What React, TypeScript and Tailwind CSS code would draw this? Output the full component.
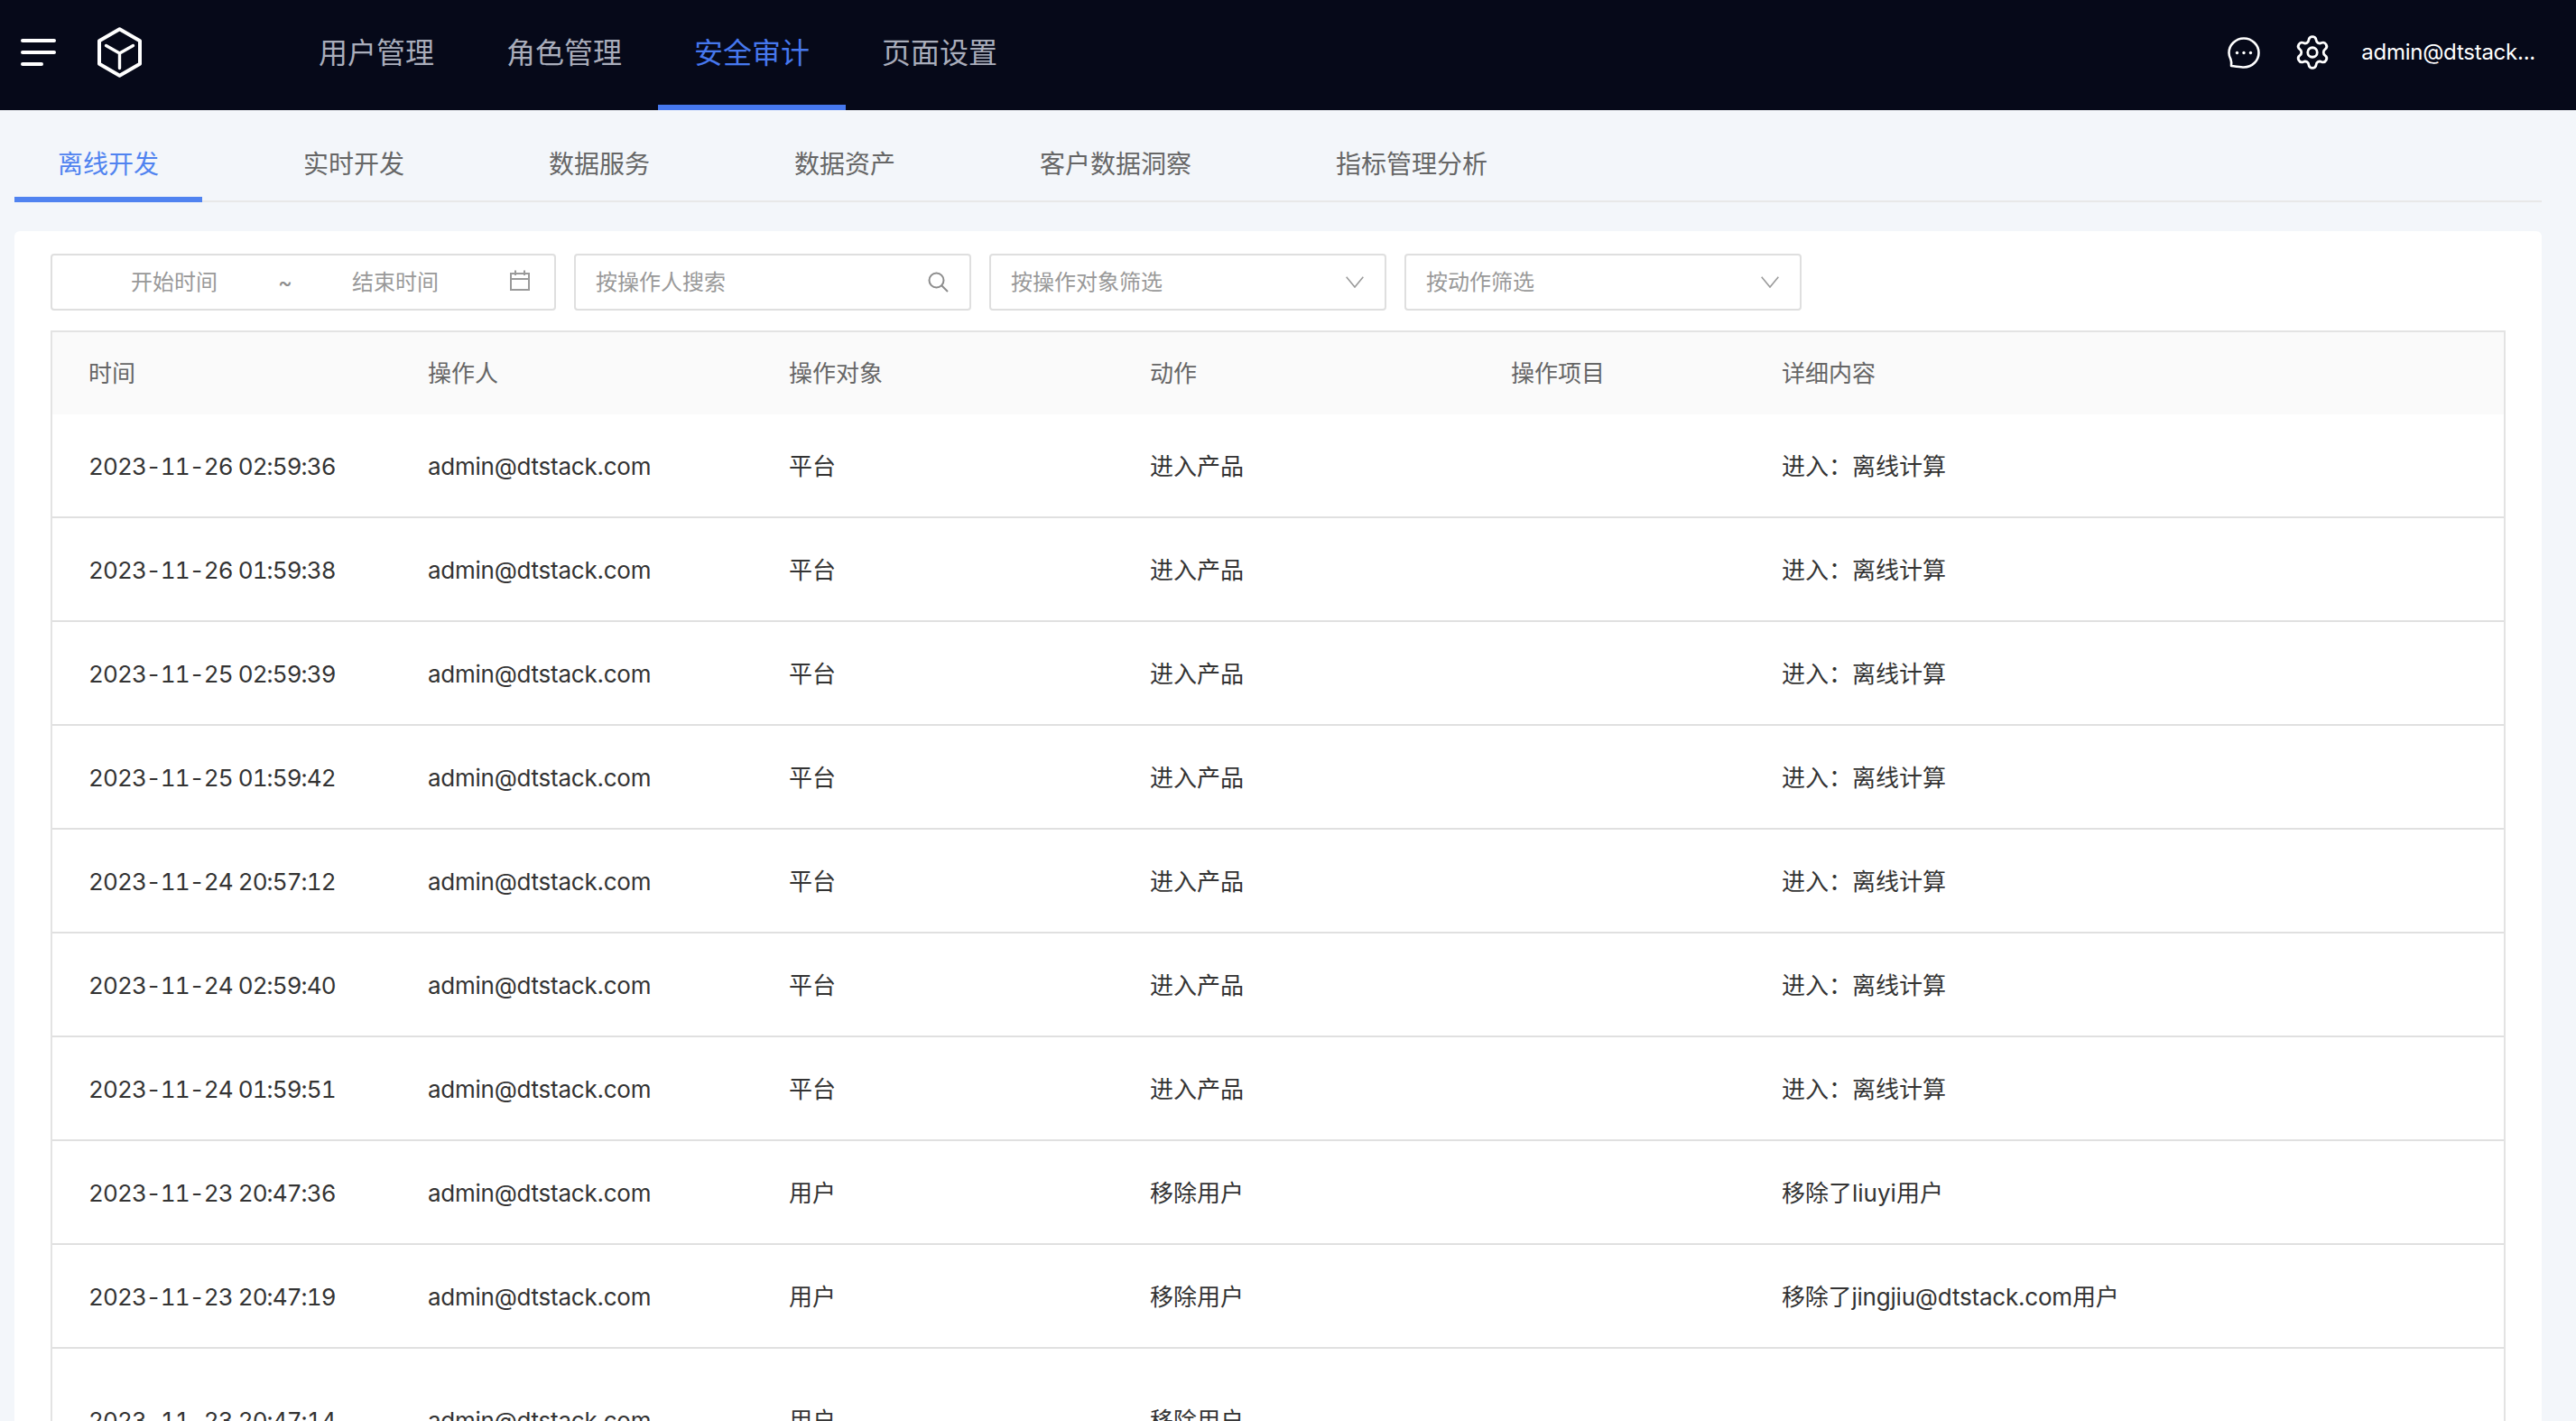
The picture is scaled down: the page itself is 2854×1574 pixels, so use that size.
import { Settings } from "lucide-react"

const navItems = ["用户管理", "角色管理", "安全审计", "页面设置"]
const tabs = ["离线开发", "实时开发", "数据服务", "数据资产", "客户数据洞察", "指标管理分析"]
const columns = ["时间", "操作人", "操作对象", "动作", "操作项目", "详细内容"]

const rows = [
  ["2023-11-26 02:59:36", "平台", "进入产品", "进入：离线计算"],
  ["2023-11-26 01:59:38", "平台", "进入产品", "进入：离线计算"],
  ["2023-11-25 02:59:39", "平台", "进入产品", "进入：离线计算"],
  ["2023-11-25 01:59:42", "平台", "进入产品", "进入：离线计算"],
  ["2023-11-24 20:57:12", "平台", "进入产品", "进入：离线计算"],
  ["2023-11-24 02:59:40", "平台", "进入产品", "进入：离线计算"],
  ["2023-11-24 01:59:51", "平台", "进入产品", "进入：离线计算"],
  ["2023-11-23 20:47:36", "用户", "移除用户", "移除了liuyi用户"],
  ["2023-11-23 20:47:19", "用户", "移除用户", "移除了jingjiu@dtstack.com用户"],
]

const gridCols = "grid grid-cols-[416px_400px_400px_400px_300px_1fr]"

const Chevron = () => (
  <svg width="20" height="13" viewBox="0 0 20 13" fill="none" stroke="#9a9a9a" strokeWidth="1.6" className="shrink-0">
    <path d="M0.7 0.7 L10 12 L19.3 0.7" />
  </svg>
)

const Logo = () => (
  <svg width="49" height="56" viewBox="0 0 49 56" fill="none" stroke="#fff" strokeWidth="4" className="shrink-0">
    <path d="M24.5 2.3 L47 15.2 V40.8 L24.5 53.7 L2 40.8 V15.2 Z" strokeLinejoin="round" />
    <path d="M9.5 20.5 L24.5 29 L39.5 20.5 M24.5 29 V45.5" strokeWidth="3.4" strokeLinecap="round" />
  </svg>
)

const MessageIcon = () => (
  <svg width="36" height="35" viewBox="0 0 36 35" fill="none" className="shrink-0">
    <path
      d="M18 1.5 C27.1 1.5 34.5 8.9 34.5 17.5 C34.5 26.3 27.1 33.5 18 33.5 C15 33.5 9 32.5 4 32 C4.3 29 4.5 27.5 3.4 24.5 C2 22 1.5 19.5 1.5 17.5 C1.5 8.9 8.9 1.5 18 1.5 Z"
      stroke="#fff"
      strokeWidth="2.6"
      strokeLinejoin="round"
    />
    <circle cx="10.5" cy="17.5" r="1.7" fill="#fff" />
    <circle cx="18" cy="17.5" r="1.7" fill="#fff" />
    <circle cx="25.5" cy="17.5" r="1.7" fill="#fff" />
  </svg>
)

const App = () => {
  return (
    <div className="h-screen overflow-hidden flex flex-col bg-[#f3f6fa] font-['Inter','Noto_Sans_CJK_SC',sans-serif]">
      <header className="h-[122px] shrink-0 flex bg-[#060919]">
        <div className="h-[116px] flex items-center pl-[23px]">
          <div className="flex flex-col gap-[9px] w-[39px]">
            <span className="h-[4px] w-[39px] rounded-full bg-white" />
            <span className="h-[4px] w-[39px] rounded-full bg-white" />
            <span className="h-[4px] w-[25px] rounded-full bg-white" />
          </div>
          <div className="ml-[46px]">
            <Logo />
          </div>
        </div>
        <nav className="flex ml-[156px]">
          {navItems.map((item) => (
            <div
              key={item}
              className={
                item === "安全审计"
                  ? "h-[122px] px-10 pt-[2px] flex items-center border-b-[6px] border-[#4678ee] text-[32px] text-[#4678ee]"
                  : "h-[122px] px-10 pt-[2px] flex items-center border-b-[6px] border-transparent text-[32px] text-[#a9adbb]"
              }
            >
              {item}
            </div>
          ))}
        </nav>
        <div className="ml-auto h-[116px] flex items-center pr-[45px]">
          <MessageIcon />
          <Settings size={42} strokeWidth={1.6} color="#fff" className="ml-[37px]" />
          <span className="ml-[33px] text-[24px] leading-none tracking-[-0.25px] text-white">admin@dtstack...</span>
        </div>
      </header>

      <div className="ml-4 mr-[38px] h-[102px] shrink-0 flex items-stretch border-b-2 border-[#e8e8e8]">
        {tabs.map((tab, i) => (
          <div
            key={tab}
            className={
              i === 0
                ? "h-[102px] px-12 mr-16 pt-6 flex items-center border-b-[6px] border-[#5083f0] text-[28px] text-[#5083f0]"
                : "h-[102px] px-12 mr-16 pt-6 flex items-center border-b-[6px] border-transparent text-[28px] text-[#666666]"
            }
          >
            {tab}
          </div>
        ))}
      </div>

      <main className="ml-4 mr-[38px] mt-8 flex-1 min-h-0 rounded-t-md bg-white px-10 pt-[25px]">
        <div className="flex gap-5 text-[24px] text-[#999999]">
          <div className="w-[560px] h-[63px] flex items-center rounded border-2 border-[#dfdfdf] pl-[87px] pr-[27px]">
            <span>开始时间</span>
            <span className="ml-[67px] text-[#8c8c8c]">~</span>
            <span className="ml-[66px]">结束时间</span>
            <svg width="22" height="23" viewBox="0 0 22 23" fill="none" stroke="#9a9a9a" strokeWidth="2" className="ml-auto mb-1 shrink-0">
              <path d="M1 4 H21 V22 H1 Z M1 10 H21 M6 0.5 V6 M16 0.5 V6" />
            </svg>
          </div>
          <div className="w-[440px] h-[63px] flex items-center rounded border-2 border-[#dfdfdf] pl-[22px] pr-[23px]">
            <span>按操作人搜索</span>
            <svg width="23" height="23" viewBox="0 0 23 23" fill="none" stroke="#8c8c8c" strokeWidth="2" className="ml-auto shrink-0">
              <circle cx="9.5" cy="9.5" r="8" />
              <path d="M15 15 L22 22" />
            </svg>
          </div>
          <div className="w-[440px] h-[63px] flex items-center justify-between rounded border-2 border-[#dfdfdf] pl-[22px] pr-[23px]">
            <span>按操作对象筛选</span>
            <Chevron />
          </div>
          <div className="w-[440px] h-[63px] flex items-center justify-between rounded border-2 border-[#dfdfdf] pl-[22px] pr-[23px]">
            <span>按动作筛选</span>
            <Chevron />
          </div>
        </div>

        <div className="mt-[22px] border-x-2 border-t-2 border-[#e3e3e3] text-[26px] leading-none">
          <div className={`${gridCols} h-[91px] items-center bg-[#fafafa] text-[#666666]`}>
            {columns.map((col, i) => (
              <div key={col} className={i === 0 ? "pl-[40px]" : ""}>
                {col}
              </div>
            ))}
          </div>
          {rows.map((row, i) => (
            <div key={i} className={`${gridCols} h-[115px] pt-[2px] items-center border-b-2 border-[#e0e0e0] text-[#333333]`}>
              <div className="pl-[40px] tabular-nums tracking-[-0.9px]">{row[0]}</div>
              <div className="tracking-[-0.25px]">admin@dtstack.com</div>
              <div>{row[1]}</div>
              <div>{row[2]}</div>
              <div />
              <div className={i === 8 ? "tracking-[-0.2px]" : ""}>{row[3]}</div>
            </div>
          ))}
          <div className={`${gridCols} h-[157px] pt-[2px] items-center text-[#333333]`}>
            <div className="pl-[40px] tabular-nums tracking-[-0.9px]">2023-11-23 20:47:14</div>
            <div className="tracking-[-0.25px]">admin@dtstack.com</div>
            <div>用户</div>
            <div>移除用户</div>
            <div />
            <div />
          </div>
        </div>
      </main>
    </div>
  )
}

export default App
